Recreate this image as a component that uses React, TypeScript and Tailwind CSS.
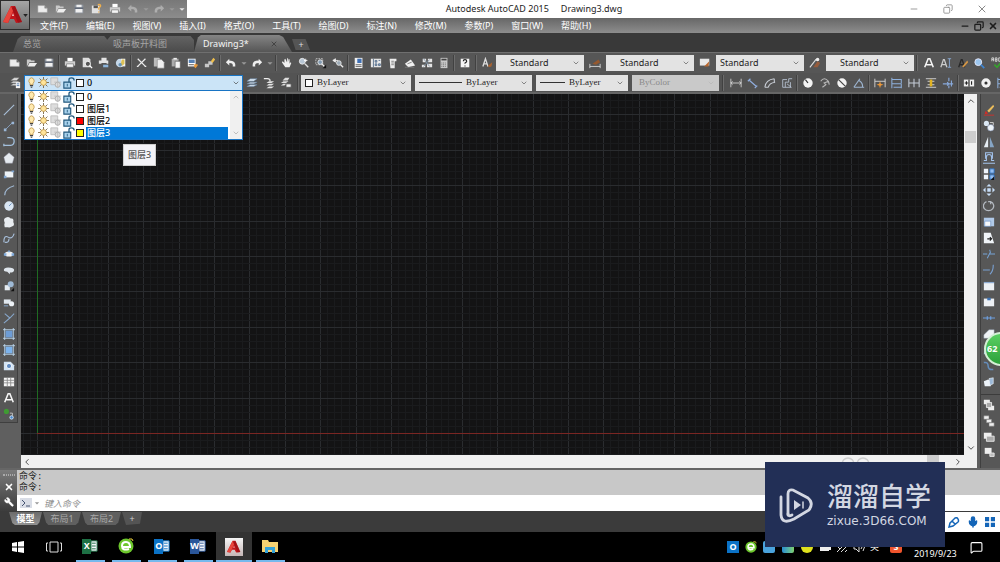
import { useState } from 'react';
import type { ReactNode } from 'react';
import { ChevronDown, ChevronLeft, ChevronRight, ChevronUp, Copy, MessageSquare, Mic, Minus, Wrench, X } from 'lucide-react';

const icons: Record<string, ReactNode> = {
  // file
  new: <path d="M1 3h8l3 3v5H1z M9 3v3h3" fill="#ececec" stroke="#999" strokeWidth=".6" />,
  open: <><path d="M1 3h4l1 1h4v2H4l-3 5z" fill="#c9c9c9" /><path d="M4 7h9l-3 4H2z" fill="#eee" /></>,
  save: <><path d="M2 2h10v10H2z" fill="#8e959f" /><path d="M4 2h6v3H4z M3 7h8v4H3z" fill="#f0f0f0" /><path d="M2 6h10" stroke="#3d4656" /></>,
  saveAs: <><path d="M1 3h9v9H1z" fill="#e0e0e0" /><path d="M3 3h5v3H3z" fill="#555" /><path d="M8 2q4-1 3 2l-2 2v2 M9 10v1" stroke="#f0b04c" strokeWidth="1.6" fill="none" /></>,
  print: <><path d="M4 1h6v4H4z" fill="#fff" /><path d="M1 5h12v5H1z" fill="#cfcfcf" /><path d="M3 8h8v4H3z" fill="#f5f5f5" stroke="#666" strokeWidth=".7" /></>,
  preview: <><path d="M2 1h7l2 2v9H2z" fill="#ddd" /><circle cx="8" cy="8" r="3" fill="#555" stroke="#fff" /><path d="m10 10 3 3" stroke="#fff" strokeWidth="1.5" /></>,
  publish: <><path d="M4 1h6v3H4z M1 4h11v4H1z" fill="#e4e4e4" /><path d="M4 7h6v4H4z" fill="#555" /><path d="M6 9h6v3H6z" fill="#8db6dc" /></>,
  globe: <><circle cx="6" cy="7" r="5" fill="#c4d7e8" /><path d="M7 2h5v9H7z" fill="#f2f2f2" /><path d="M8 3h3v5l-2 2H6z" fill="#ddc257" /><circle cx="6" cy="9" r="2" fill="#6894b8" /></>,
  cut: <path d="M2 2l9 9 M11 2 2 11 M1 11h2 M10 11h2" stroke="#eee" strokeWidth="1.4" />,
  copy: <><path d="M1 1h6l2 2v8H1z" fill="#bbb" /><path d="M5 3h5l3 3v7H5z" fill="#f0f0f0" stroke="#777" strokeWidth=".6" /></>,
  paste: <><path d="M2 2h8v9H2z" fill="#aaa" /><path d="M4 1h4v2H4z" fill="#eee" /><path d="M6 5h6v8H6z" fill="#f4f4f4" stroke="#555" strokeWidth=".7" /></>,
  match: <><path d="M1 2h9v9H1z" fill="#fff" /><path d="M2 3h7v4H2z" fill="#5681b5" /><path d="M2 9h6" stroke="#444" /><path d="m9 8 4 1-3 4-2-2z" fill="#e79a3c" /></>,
  brush: <><path d="M1 8h5v4H1z M5 5h5v4H5z" fill="#c7c7c7" /><path d="m8 5 3-4 2 2-3 4z" fill="#efbf4c" /></>,
  undo: <path d="M1 6l4-4v2q8 0 7 7h-3q1-4-4-4v3z" fill="#eee" />,
  redo: <path d="M13 6 9 2v2q-8 0-7 7h3q-1-4 4-4v3z" fill="#eee" />,
  caret: <path d="M4 6h6l-3 3z" fill="#999" />,
  hand: <path d="m4 7-2-2-1 1 4 6h5l2-5-1-1-1 2V3l-1-1-1 4V2L7 1v5L5 2 4 3z" fill="#f0f0f0" />,
  zoom: <><circle cx="5" cy="5" r="3.4" fill="#b8c7d5" stroke="#eee" /><path d="m8 8 4 4" stroke="#ddd" strokeWidth="1.6" /><path d="M9 2v4 M7 4h4" stroke="#fff" /></>,
  zoomWin: <><path d="M1 2h8v7H1z" fill="none" stroke="#ccc" strokeDasharray="2 1" /><circle cx="6" cy="6" r="2.7" fill="#8199b0" stroke="#eee" /><path d="m8 8 3 3" stroke="#eee" strokeWidth="1.5" /><path d="M13 9v4H9z" fill="#111" /></>,
  zoomPrev: <><path d="M1 4h6 M1 4l3-2v4z" stroke="#eee" fill="#eee" /><circle cx="8" cy="7" r="2.7" fill="#9ba9b5" stroke="#eee" /><path d="m10 9 3 3" stroke="#eee" strokeWidth="1.5" /></>,
  props: <><path d="M2 1h9v12H2z" fill="#f0f0f0" /><path d="M5 2h5v5H5z" fill="#3f70b5" /><path d="M3 9h7 M3 11h7" stroke="#555" /></>,
  palette: <><path d="M1 2h12v10H1z" fill="#e8e8e8" /><path d="M4 2v10 M6 4h2v2H6z M10 4h2 M6 8h2v2H6z M10 8h2v2h-2z" stroke="#536b87" fill="#9fb7d2" /></>,
  toolPal: <><path d="M3 2h8v3H9v8H4z" fill="#ededed" /><path d="M5 5h3 M5 7h3 M5 9h3" stroke="#777" /></>,
  sheet: <><path d="m1 8 7-5 5 7-8 2z" fill="#f0f0f0" /><path d="m4 8 5-2 M1 12h11" stroke="#777" /></>,
  markup: <><path d="M2 2h4v4H2z M8 2h5v4H8z M7 8h6v4H7z M1 9h4v3H1z" fill="#e5e5e5" /><path d="m3 2 7 9 M10 3 3 11" stroke="#7d91a4" /></>,
  calc: <><path d="M3 1h8v12H3z" fill="#c9c9c9" /><path d="M4 3h6" stroke="#444" strokeWidth="2" /><path d="M4 7h6 M4 9h6 M4 11h6" stroke="#666" strokeDasharray="1 1" /></>,
  help: <><path d="M2 2h10v10H2z" fill="#f4f4f4" /><path d="M5 5q0-2 2-2t2 2q0 1-2 2v1 M7 10v1" stroke="#222" fill="none" strokeWidth="1.3" /></>,
  textStyle: <><path d="m1 11 3-9 3 9 M2 8h4" stroke="#ddd" fill="none" strokeWidth="1.5" /><path d="m7 10 5-4-1 5-3 1z" fill="#a8612f" /></>,
  dimStyle: <><path d="M1 8v5 M13 8v5 M1 11h12" stroke="#ddd" /><path d="m4 8 7-5 2 3-5 3z" fill="#96592f" /></>,
  tableStyle: <><path d="M1 2h11v8H1z" fill="#e8e8e8" /><path d="m6 11 6-6-1 6z" fill="#b8662d" /></>,
  leaderStyle: <><path d="M1 12 8 3h3" stroke="#ddd" fill="none" strokeWidth="1.3" /><path d="m5 12 5-7 3 2-3 5z" fill="#965b3b" /><circle cx="10" cy="3" r="2" fill="#eee" /></>,
  textA: <path d="M2 12 6 2h2l4 10 M4 9h6" stroke="#f5f5f5" fill="none" strokeWidth="1.8" />,
  textAI: <><path d="m1 12 3-9h1l3 9 M2 9h5" stroke="#ccc" fill="none" strokeWidth="1.5" /><path d="M9 2h4 M9 12h4 M11 2v10" stroke="#8caeda" /></>,
  textEdit: <><path d="m2 12 3-9h1l3 9 M4 9h4" stroke="#292929" fill="none" strokeWidth="1.6" /><path d="m6 11 6-7 1 2-5 6z" fill="#d49645" /></>,
  find: <><circle cx="5" cy="6" r="4" fill="#9dc7ef" stroke="#eef" /><path d="m8 9 4 4" stroke="#3f84cf" strokeWidth="2" /></>,
  spell: <><path d="M1 5V1h2v4 M1 3h2 M5 1h2v4H5z M5 3h2 M12 1H9v4h3" stroke="#ddd" fill="none" /><path d="m4 9 3 3 5-6" stroke="#36a12d" fill="none" strokeWidth="2" /></>,
  // layers
  layers: <><path d="m2 4 4-3h6L9 4z M2 7l3-2h7L9 7z M2 10l3-2h7l-3 2z" fill="#dedede" stroke="#777" strokeWidth=".5" /><path d="M8 6h5v7H8z" fill="#f4f4f4" /><path d="M9 8h3 M9 10h3" stroke="#4f79ad" /></>,
  layerCur: <path d="m1 5 4-3h8L9 5z M1 8l4-2h8L9 8z M1 11l4-2h8l-4 2z" fill="#d7e5f1" stroke="#6684a4" strokeWidth=".6" />,
  layerPrev: <><path d="m4 7 3-2h6l-3 2z M4 10l3-2h6l-3 2z M4 13l3-2h6l-3 2z" fill="#e3e3e3" /><path d="M1 2h4q4 0 3 3" stroke="#eee" fill="none" strokeWidth="1.5" /></>,
  layerState: <><path d="m3 4 3-3h5L9 4z M1 7l3-2h6L7 7z M1 10l3-2h4l-3 2z" fill="#ddd" /><path d="M7 8h6v4H7z" fill="#efefef" stroke="#555" /></>,
  bulb: <><path d="M7 1a4 4 0 0 0-2 7v2h4V8a4 4 0 0 0-2-7" fill="#ffeab0" stroke="#ba9041" /><path d="M5 11h4 M6 13h2" stroke="#444" strokeWidth="1.4" /></>,
  sun: <><path d="M7 0v14 M0 7h14 M2 2l10 10 M12 2 2 12" stroke="#665330" /><circle cx="7" cy="7" r="3.7" fill="#ffe49a" stroke="#bd9345" /></>,
  vp: <><path d="M1 1h8v8H1z" fill="#ddd" stroke="#bbb" /><circle cx="9" cy="9" r="3" fill="#ddd" stroke="#aaa" /><path d="M5 6h8 M9 5v8" stroke="#bbb" /></>,
  lock: <><path d="M1 6h8v7H1z" fill="#a9d2ec" stroke="#20577c" strokeWidth="1.3" /><path d="M7 6V3q0-2 3-2 3 0 3 3" stroke="#20577c" fill="none" strokeWidth="1.5" /><path d="M5 8v3" stroke="#20577c" /></>,
  // dimensions
  dimLin: <path d="M1 2v10 M13 2v10 M1 7h12 M3 5 1 7l2 2 M11 5l2 2-2 2" stroke="#d5d5d5" fill="none" />,
  dimAl: <path d="m1 5 3-3 M9 13l3-3 M3 4l8 7" stroke="#91aede" fill="none" strokeWidth="1.4" />,
  dimArc: <path d="M1 12Q2 3 12 2 M5 12q1-5 8-6 M1 12h4 M12 2v4" stroke="#c9ced6" fill="none" strokeWidth="1.2" />,
  dimOrd: <path d="M2 3v9h10 M5 12V6h4V2h4 M2 3h5 M7 8l5 4 M11 6v6" stroke="#b9c5d4" fill="none" />,
  dimRad: <><circle cx="7" cy="7" r="5.5" fill="#f3f3f3" /><path d="m7 7-3-4" stroke="#333" strokeWidth="1.4" /></>,
  dimJog: <path d="M2 5q4-6 9 0l1 4 M11 5 6 7l2 2-4 3" stroke="#b8b8b8" fill="none" strokeWidth="1.3" />,
  dimDia: <><circle cx="7" cy="7" r="5.5" fill="#f3f3f3" /><path d="m3 3 8 8" stroke="#444" strokeWidth="1.4" /></>,
  dimAng: <path d="M1 12h12 M1 12 8 2 M7 4q5 3 4 8" stroke="#9eb6d2" fill="none" strokeWidth="1.3" />,
  dimQuick: <><path d="M1 2v10 M13 2v10 M1 5h12" stroke="#ddd" /><path d="m7 5 1 3 3 1-3 1-1 3-1-3-3-1 3-1z" fill="#ec9839" /></>,
  dimBase: <path d="M1 1v12 M1 3h11v4 M1 8h11v5 M3 12h9" stroke="#8fb1dd" fill="none" strokeWidth="1.2" />,
  dimCont: <path d="M1 2v10 M7 2v10 M13 2v10 M1 7h12" stroke="#c7cfda" strokeWidth="1.2" />,
  dimSpace: <><path d="M1 2h12 M1 12h12 M3 5h8 M3 9h8" stroke="#ddd" /><path d="M7 3v8" stroke="#e2b321" strokeWidth="3" /></>,
  dimBreak: <path d="M1 8h12 M8 1v4 M8 10v3 M11 4v7 M6 6l2 2-2 2" stroke="#88a9db" fill="none" strokeWidth="1.3" />,
  tol: <><path d="M1 3h12v8H1z" fill="#eee" /><path d="M2 7h4 M4 5v4 M7 3v8 M10 5v4" stroke="#222" strokeWidth="1.3" /></>,
  center: <><circle cx="7" cy="7" r="5.5" fill="#f1f1f1" /><circle cx="7" cy="7" r="1.8" fill="#333" /></>,
  // draw
  line: <path d="M1 13 13 1" stroke="#a8bed6" strokeWidth="1.3" />,
  xline: <><path d="m3 11 8-8" stroke="#8aa6c8" /><path d="M1 10h3v3H1z M10 2h3v3h-3z" fill="#9ab6d6" /></>,
  pline: <path d="M5 2h3q5 0 5 4t-4 5H1 M1 9v3" stroke="#a2bfdb" fill="none" strokeWidth="1.5" />,
  polygon: <path d="m7 1 6 5-2 7H3L1 6z" fill="#e6ebf0" stroke="#99a" strokeWidth=".5" />,
  rect: <><path d="M2 4h10v7H2z" fill="#edf2f6" /><path d="M1 9h3v3H1z M10 3h3v2h-3z" fill="#7fa5d0" /></>,
  arc: <path d="M2 13q0-8 11-11" stroke="#9fb7d1" fill="none" strokeWidth="1.4" />,
  circle: <><circle cx="7" cy="7" r="5.5" fill="#d9e6f3" /><path d="m7 7 3-3" stroke="#5d87ba" /></>,
  cloud: <path d="M2 13q-1-3 0-5-2-5 1-6 4-2 6 1 4-1 3 4 2 4-1 5-3 2-5 1z" fill="#e8ecf0" />,
  spline: <path d="M1 12q0-9 5-6t7-4 M2 12q5 1 5-4" stroke="#a9c1dd" fill="none" strokeWidth="1.3" />,
  ellipse: <><ellipse cx="7" cy="7" rx="5" ry="3" fill="#eef1f4" /><path d="M1 6h3v3H1z M10 6h3v3h-3z M6 3h2v2H6z" fill="#7faadb" /></>,
  ellArc: <path d="M1 7q0-3 5-3 7 0 7 3 0 3-5 3v2L5 9q-4 0-4-2" fill="#dfe6ed" />,
  insert: <><path d="M2 6h6v6H2z" fill="#e5ebf1" /><circle cx="9" cy="5" r="3.5" fill="#9eb9d5" /><path d="M13 9v4H9z" fill="#111" /></>,
  block: <><path d="M1 4h8v5H1z" fill="#e0e7ee" /><circle cx="10" cy="9" r="3" fill="#edf2f7" /><path d="M1 11h5v1H1z" fill="#8eb5e0" /></>,
  point: <path d="m2 2 6 5 5-5 M8 7l-7 6" stroke="#88a8cc" fill="none" strokeWidth="1.2" />,
  hatch: <><path d="M3 3h8v8H3z" fill="#6d9cd5" /><path d="M2 0v14 M12 0v14 M0 2h14 M0 12h14" stroke="#bfd9f1" /></>,
  grad: <><path d="M3 3h8v8H3z" fill="#7cb3ed" /><path d="M2 0v14 M12 0v14 M0 2h14 M0 12h14" stroke="#bfd9f1" /></>,
  region: <><path d="M1 2h8l4 4v6H1z" fill="#d2e3f3" /><circle cx="7" cy="7" r="3" fill="#5f8ac1" stroke="#fff" /></>,
  table: <><path d="M1 2h12v10H1z" fill="#f5f5f5" /><path d="M1 5h12 M1 8h12 M5 2v10 M9 2v10" stroke="#888" /></>,
  addSel: <><circle cx="4" cy="4" r="3" fill="#3f9b33" /><path d="M8 6h3v3" stroke="#ccc" fill="none" /><circle cx="10" cy="11" r="2" fill="#4a88cb" stroke="#dcecff" /></>,
  // modify
  erase: <><path d="m5 8 7-7 1 2-6 7z" fill="#edbd5b" /><path d="m3 8 3 3-4 1z" fill="#d62c25" /><path d="M1 13h12" stroke="#d72f29" /></>,
  copyObj: <><circle cx="4" cy="4" r="3" fill="#dbe8f4" /><circle cx="9" cy="9" r="3.8" fill="#edf3f8" stroke="#78a" strokeWidth=".6" /><path d="M8 3h4v3" stroke="#ddd" fill="none" /></>,
  mirror: <><path d="M6 1v12H1z" fill="#e6edf3" /><path d="M8 1v12h5z" fill="#86a5c5" /></>,
  offset: <path d="M0 13h14 M1 10h3V6q0-3 3-3t3 3v4h3 M3 8V1h8v7" stroke="#a3c3ec" fill="none" strokeWidth="1.2" />,
  array: <><path d="M1 1h5v5H1z M1 8h5v5H1z" fill="#eef4fb" /><path d="M8 1h5v5H8z M8 8h5v5H8z" fill="#94bdf0" stroke="#286dbb" /><path d="M13 10v4H9z" fill="#111" /></>,
  move: <path d="m7 0 3 3H4z M7 14l3-3H4z M0 7l3-3v6z M14 7l-3-3v6z M5 5h4v4H5z" fill="#c7def8" />,
  rotate: <path d="M4 2a6 5.500 0 1 0 5 0M6 2h3v3" stroke="#b4bac1" fill="none" strokeWidth="1.5" />,
  scale: <><path d="M1 2h12v10H1z" fill="#b1cae8" /><path d="M2 6h7v6H2z" fill="#f5f8fb" stroke="#4b79b5" strokeWidth=".6" /></>,
  stretch: <><path d="M1 1h8l4 12H1z" fill="#f0f4f8" /><path d="M5 8h5m-2-2 2 2-2 2" stroke="#222" fill="none" strokeWidth="1.3" /></>,
  trim: <path d="M0 7h5 M8 7h6 M8 2v2 M5 12l4-8" stroke="#76a3d6" strokeWidth="1.2" />,
  extend: <path d="M0 7h8 M8 12q4-3 4-11" stroke="#799fd0" fill="none" strokeWidth="1.3" />,
  breakPt: <><path d="M1 3h12v9H1z" fill="#edf0f4" /><path d="M1 3h12" stroke="#8caad0" strokeWidth="1.5" /></>,
  break: <><path d="M1 3h12v9H1z" fill="#edf0f4" /><path d="M5 2h4v3H5z" fill="#3e72b2" /></>,
  join: <path d="M0 7h14 M5 5v4 M9 5v4" stroke="#6fa0e0" strokeWidth="1.4" />,
  chamfer: <path d="M1 8 7 2h6v10H1z" fill="#eff2f5" stroke="#89a" strokeWidth=".5" />,
  fillet: <path d="M1 12q0-9 8-9h4v9z" fill="#adc9e8" />,
  blend: <path d="M1 3q5-1 5 4t6 4" stroke="#648dbb" fill="none" strokeWidth="1.8" />,
  explode: <><path d="m1 6 5-2 3 2v6H2z" fill="#ecf2f8" /><path d="m7 3 5-1v7l-4 2z" fill="#9dbad9" stroke="#fff" strokeWidth=".6" /></>,
  order1: <><path d="M1 1h7v5H1z M6 8h7v5H6z" fill="#eee" /><path d="M4 4h6v6H4z" fill="#aaa" stroke="#eee" /></>,
  order2: <path d="M1 1h6v4H1z M4 5h6v4H4z M7 9h6v4H7z" fill="#eee" stroke="#777" strokeWidth=".6" />,
  order3: <><path d="M1 2h9v7H1z" fill="#eee" /><path d="M4 6h9v6H4z" fill="#aaa" stroke="#eee" /></>,
  order4: <><path d="M2 1h8v7H2z" fill="#eee" /><path d="M8 7h5v4H8z" fill="#bbb" stroke="#eee" /></>,
};

function ToolButton({ name, className = 'w-[17px]' }: { name: string; className?: string }) {
  return (
    <button type="button" aria-label={name} className={`flex h-4 shrink-0 items-center justify-center ${className}`}>
      <Glyph name={name} />
    </button>
  );
}

function Glyph({ name, className = 'size-3' }: { name: string; className?: string }) {
  return <svg viewBox="0 0 14 14" className={`shrink-0 ${className}`}>{icons[name]}</svg>;
}

const Tools = ({ names }: { names: string[] }) => (
  <div className="flex shrink-0">{names.map((n) => <ToolButton key={n} name={n} />)}</div>
);

const Sep = ({ className = 'w-1' }: { className?: string }) => (
  <span className={`flex h-4 shrink-0 justify-center ${className}`}>
    <span className="w-px bg-[#414141]" />
    <span className="w-px bg-[#6c6c6c]" />
  </span>
);

function Combo({ label, value, className, children, disabled = false }: {
  label: string;
  value: string;
  className: string;
  children?: ReactNode;
  disabled?: boolean;
}) {
  return (
    <label className={`flex h-4 shrink-0 items-center gap-1 pr-1 ${disabled ? 'bg-[#c9c9c9] text-[#8a8a8a]' : 'bg-[#e3e3e3] text-[#1c1c1c]'} ${className}`}>
      {children}
      <select aria-label={label} disabled={disabled} className="h-4 min-w-0 flex-1 appearance-none bg-transparent">
        <option>{value}</option>
      </select>
      <ChevronDown className={`size-2 ${disabled ? 'text-[#b5b5b5]' : 'text-[#555]'}`} />
    </label>
  );
}

const menus = ['文件(F)', '编辑(E)', '视图(V)', '插入(I)', '格式(O)', '工具(T)', '绘图(D)', '标注(N)', '修改(M)', '参数(P)', '窗口(W)', '帮助(H)'];

const AutocadMark = ({ className }: { className: string }) => (
  <svg viewBox="0 0 20 20" className={className}>
    <path d="M8 1h4l7 16-6 1-2-4H7l-2 4-5-1z" fill="#c3161c" />
    <path d="M8 1 0 17l5 1 5-12z" fill="#e8453c" />
    <path d="m10 8 1 3H9z" fill="#f1c9c6" />
    <path d="m12 1 7 16-4 1L9 3z" fill="#8f0d12" opacity=".6" />
  </svg>
);

function Header() {
  return (
    <header className="flex h-[33px] bg-[#686868]">
      <button type="button" aria-label="应用程序菜单" className="flex h-[30px] w-[30px] shrink-0 items-center border border-[#2c2c2c] bg-linear-to-b from-[#a5a5a5] to-[#6b6b6b] pl-0.5">
        <AutocadMark className="size-5" />
        <svg viewBox="0 0 6 4" className="h-[3px] w-[5px]"><path d="M0 0h6L3 4z" fill="#222" /></svg>
      </button>
      <div className="flex min-w-0 flex-1 flex-col">
        <div className="flex h-[18px] bg-white">
          <div className="flex w-[157px] shrink-0 items-center bg-linear-to-b from-[#787878] to-[#8c8c8c] pl-1">
            {['new', 'open', 'save', 'saveAs', 'print', 'undo'].map((n) => <ToolButton key={n} name={n} className={n === 'undo' ? 'w-[18px] opacity-40' : 'w-[18px]'} />)}
            <ToolButton name="caret" className="w-2" />
            <ToolButton name="redo" className="w-[18px] opacity-40" />
            <ToolButton name="caret" className="w-2" />
            <ToolButton name="caret" className="w-3 brightness-150" />
          </div>
          <h1 className="flex flex-1 items-center justify-center gap-3 pr-6 text-[9px] text-[#1c1c1c]">
            <span>Autodesk AutoCAD 2015</span>
            <span>Drawing3.dwg</span>
          </h1>
          <div className="flex w-[95px] shrink-0 items-center justify-between pr-3 pl-1 text-[#8a8a8a]">
            <button type="button" aria-label="最小化"><Minus className="size-2.5" /></button>
            <button type="button" aria-label="还原"><Copy className="size-2.5 -scale-x-100" /></button>
            <button type="button" aria-label="关闭"><X className="size-3" /></button>
          </div>
        </div>
        <nav className="flex flex-1 items-center bg-linear-to-b from-[#676767] to-[#8d8d8d] pl-2.5 text-[9px] text-white">
          {menus.map((m) => <button key={m} type="button" className="mr-[18px] shrink-0 leading-3">{m}</button>)}
          <div className="ml-auto flex gap-1 pr-0.5 text-[#1d1d1d]">
            <Minus className="size-2.5" strokeWidth={3} />
            <Copy className="size-2.5 -scale-x-100" strokeWidth={3} />
            <X className="size-2.5" strokeWidth={4} />
          </div>
        </nav>
      </div>
    </header>
  );
}

function FileTabs() {
  return (
    <div className="flex h-[19px] items-end bg-[#393939] pl-[13px] text-[9px] text-[#a5a5a5]">
      <button type="button" className="h-4 w-[94px] bg-linear-to-b from-[#636363] to-[#4b4b4b] pl-2.5 text-left [clip-path:polygon(9%_0,97%_0,100%_20%,100%_100%,0_100%,5%_18%)]">总览</button>
      <button type="button" className="h-4 w-[87px] bg-linear-to-b from-[#636363] to-[#4b4b4b] pl-1.5 text-left [clip-path:polygon(4%_0,96%_0,100%_25%,100%_100%,0_100%,0_25%)]">吸声板开料图</button>
      <div className="flex h-[17px] w-[98px] items-center justify-between bg-linear-to-b from-[#858585] to-[#565656] pr-[14px] pl-[9px] text-[#f5f5f5] [clip-path:polygon(7%_0,87%_0,91%_12%,100%_100%,0_100%,4%_15%)]">
        <button type="button">Drawing3*</button>
        <X className="size-2 text-[#444]" strokeWidth={3} />
      </div>
      <button type="button" aria-label="新图形" className="mb-0.5 h-[11px] w-[18px] bg-[#555] leading-[10px] text-[#ddd] [clip-path:polygon(0_0,75%_0,100%_100%,20%_100%)]">+</button>
    </div>
  );
}

function MainToolbar() {
  return (
    <div className="flex h-[21px] items-center overflow-hidden border-t border-[#6f6f6f] bg-[#565656] pl-1.5 text-[9px]">
      <Tools names={['new', 'open', 'save']} />
      <Sep />
      <Tools names={['print', 'preview', 'publish', 'globe']} />
      <Sep />
      <Tools names={['cut', 'copy', 'paste', 'match', 'brush']} />
      <Sep />
      <ToolButton name="undo" />
      <ToolButton name="caret" className="w-[9px]" />
      <ToolButton name="redo" />
      <ToolButton name="caret" className="w-[9px]" />
      <Sep />
      <Tools names={['hand', 'zoom', 'zoomWin', 'zoomPrev']} />
      <Sep />
      <Tools names={['props', 'palette', 'toolPal', 'sheet', 'markup', 'calc']} />
      <Sep />
      <ToolButton name="help" />
      <Sep className="w-1.5" />
      <ToolButton name="textStyle" />
      <Combo label="文字样式" value="Standard" className="w-[88px] pl-[14px]" />
      <ToolButton name="dimStyle" className="w-[22px]" />
      <Combo label="标注样式" value="Standard" className="w-[88px] pl-[14px]" />
      <ToolButton name="tableStyle" className="w-[22px]" />
      <Combo label="表格样式" value="Standard" className="w-[88px] pl-1" />
      <ToolButton name="leaderStyle" className="w-[22px]" />
      <Combo label="多重引线样式" value="Standard" className="w-[88px] pl-[14px]" />
      <Sep className="w-1.5" />
      <Tools names={['textA', 'textAI', 'textEdit', 'find', 'spell']} />
    </div>
  );
}

const layers = [
  { name: '0', color: 'bg-white' },
  { name: '图层1', color: 'bg-white' },
  { name: '图层2', color: 'bg-[#ff0000]' },
  { name: '图层3', color: 'bg-[#ffff00]' },
];

const LayerFlags = ({ color }: { color: string }) => (
  <span className="flex w-[61px] shrink-0 items-center gap-px pl-px">
    <Glyph name="bulb" className="h-[11px] w-[11px]" />
    <Glyph name="sun" className="h-[11px] w-[11px]" />
    <Glyph name="vp" className="h-3 w-3" />
    <Glyph name="lock" className="h-3 w-3" />
    <span className={`size-2 shrink-0 border border-[#222] ${color}`} />
  </span>
);

function LayerSelect() {
  const [active, setActive] = useState('图层3');

  return (
    <div className="relative ml-px w-[219px] shrink-0 text-[9px] text-black">
      <label className="flex h-4 items-center border border-[#1874c4] bg-[#cbe4f7] pr-0.5">
        <LayerFlags color="bg-white" />
        <select aria-label="图层" className="h-3.5 flex-1 appearance-none bg-transparent pl-px">
          <option>0</option>
        </select>
        <ChevronDown className="size-2 text-[#444]" />
      </label>
      <div className="absolute top-[15px] left-0 z-20 flex w-[219px] border border-[#1874c4] bg-white">
        <ul role="listbox" aria-label="图层列表" className="flex-1">
          {layers.map((layer) => (
            <li key={layer.name} role="option" aria-selected={layer.name === active} onMouseEnter={() => setActive(layer.name)} className="flex h-3 items-center">
              <LayerFlags color={layer.color} />
              <span className={`h-3 flex-1 pl-px leading-3 ${layer.name === active ? 'bg-[#0078d7] text-white' : ''}`}>{layer.name}</span>
            </li>
          ))}
        </ul>
        <div className="ml-0.5 flex w-3 flex-col items-center justify-between bg-[#f0f0f0] py-0.5 text-[#a5a5a5]">
          <ChevronUp className="size-2" />
          <ChevronDown className="size-2" />
        </div>
      </div>
      <div role="tooltip" className="absolute top-[69px] left-[99px] z-20 border border-[#cfcfcf] bg-[#f3f3f7] px-1 py-1 leading-3 whitespace-nowrap text-[#575757]">
        图层3
      </div>
    </div>
  );
}

function LayerToolbar() {
  return (
    <div className="flex h-[21px] items-center border-b-2 border-[#666] bg-[#535353] pl-1.5 font-['Liberation_Serif','Noto_Sans_CJK_SC',serif] text-[9px] font-medium">
      <ToolButton name="layers" />
      <div className="font-['Noto_Sans','Noto_Sans_CJK_SC',sans-serif]"><LayerSelect /></div>
      <Tools names={['layerCur', 'layerPrev', 'layerState']} />
      <Sep className="w-[7px]" />
      <div className="flex shrink-0 gap-1">
        <Combo label="颜色" value="ByLayer" className="w-[110px] pl-1">
          <span className="size-2 border border-[#222] bg-white" />
        </Combo>
        <Combo label="线型" value="ByLayer" className="w-[117px] pl-1">
          <span className="h-px w-[43px] bg-[#333]" />
        </Combo>
        <Combo label="线宽" value="ByLayer" className="w-[92px] pl-1">
          <span className="h-px w-[25px] bg-[#333]" />
        </Combo>
        <Combo label="打印样式" value="ByColor" className="w-[87px] pl-[7px]" disabled />
      </div>
      <Sep className="w-2" />
      <div className="flex min-w-0 flex-1 overflow-hidden">
        <Tools names={['dimLin', 'dimAl', 'dimArc', 'dimOrd']} />
        <Sep />
        <Tools names={['dimRad', 'dimJog', 'dimDia', 'dimAng']} />
        <Sep />
        <Tools names={['dimQuick', 'dimBase', 'dimCont', 'dimSpace', 'dimBreak']} />
        <Sep />
        <Tools names={['tol', 'center', 'dimBase']} />
      </div>
    </div>
  );
}

const drawTools = ['line', 'xline', 'pline', 'polygon', 'rect', 'arc', 'circle', 'cloud', 'spline', 'ellipse', 'ellArc', 'insert', 'block', 'point', 'hatch', 'grad', 'region', 'table', 'textA', 'addSel'];
const modifyTools = ['erase', 'copyObj', 'mirror', 'offset', 'array', 'move', 'rotate', 'scale', 'stretch', 'trim', 'extend', 'breakPt', 'break', 'join', 'chamfer', 'fillet', 'blend', 'explode'];

// UCS origin inside the drawing area, and the spacing of the minor grid
const ORIGIN = { x: 16, y: 339 };
const STEP = 7.08;

function DrawingGrid() {
  const range = (from: number, to: number) => Array.from({ length: to - from + 1 }, (_, i) => from + i);
  const stroke = (i: number) => (i % 5 === 0 ? '#2a2c2f' : '#1a1b1d');
  const sorted = (list: number[]) => [...list].sort((a, b) => Number(a % 5 === 0) - Number(b % 5 === 0));

  return (
    <svg className="h-full w-full bg-[#131314]" shapeRendering="crispEdges">
      {sorted(range(-2, 360)).map((i) => {
        const x = Math.round(ORIGIN.x + i * STEP) + 0.5;
        return <line key={`v${i}`} x1={x} x2={x} y1="0" y2="100%" stroke={stroke(i)} />;
      })}
      {sorted(range(-120, 47)).map((i) => {
        const y = Math.round(ORIGIN.y - i * STEP) + 0.5;
        return <line key={`h${i}`} x1="0" x2="100%" y1={y} y2={y} stroke={stroke(i)} />;
      })}
      <rect x={ORIGIN.x} y="0" width="1" height={ORIGIN.y} fill="#1f6b22" />
      <rect x={ORIGIN.x} y={ORIGIN.y} width="100%" height="1" fill="#7a2623" />
    </svg>
  );
}

function Workspace() {
  return (
    <main className="relative flex min-h-[374px] flex-1 overflow-hidden bg-[#5f5f5f]">
      <aside className="w-[21px] shrink-0 pr-[3px]">
        <div className="flex flex-col items-start border-r border-b border-[#3f3f3f] bg-[#575757] pt-2">
          {drawTools.map((n) => <ToolButton key={n} name={n} />)}
        </div>
      </aside>
      <div className="flex min-w-0 flex-1 flex-col">
        <div className="flex min-h-0 flex-1">
          <div className="h-[361px] min-w-0 flex-1"><DrawingGrid /></div>
          <div className="flex w-[13px] shrink-0 flex-col items-center bg-[#f1f1f1] py-0.5 text-[#333]">
            <ChevronUp className="size-2.5" />
            <span className="mt-[25px] h-3 w-[11px] bg-[#cdcdcd]" />
            <ChevronDown className="mt-auto size-2.5" />
          </div>
        </div>
        <div className="flex h-[13px] shrink-0 items-center bg-[#f1f1f1] px-px text-[#333]">
          <ChevronLeft className="size-2.5" />
          <span className="mr-[14px] ml-auto h-full w-3 bg-[#cdcdcd]" />
          <ChevronRight className="mr-[13px] size-2.5" />
        </div>
      </div>
      <aside className="ml-[3px] flex w-5 shrink-0 flex-col border-l border-[#3f3f3f] bg-[#575757] pt-2">
        {modifyTools.map((n) => <ToolButton key={n} name={n} className="w-[15px]" />)}
        <span className="mt-1 mb-0.5 h-px bg-[#3c3c3c]" />
        {['order1', 'order2', 'order3', 'order4'].map((n) => <ToolButton key={n} name={n} className="w-[15px]" />)}
      </aside>
      <div className="absolute top-[238px] -right-[18px] flex size-[34px] items-center rounded-full border-2 border-[#d3efd5] bg-linear-to-b from-[#5ad063] to-[#2ba13a] pl-px text-[9px] font-bold text-white">62</div>
      <svg viewBox="0 0 30 12" className="absolute right-[130px] bottom-0 h-3 w-[30px]">
        <circle cx="8" cy="8" r="6" fill="none" stroke="#cfcfcf" strokeWidth="1.5" />
        <circle cx="23" cy="8" r="6" fill="none" stroke="#cfcfcf" strokeWidth="1.5" />
      </svg>
    </main>
  );
}

function CommandLine() {
  return (
    <section className="flex h-[43px] border-t-2 border-[#666] bg-[#c8c8c8] text-[9px]">
      <div className="flex w-[17px] shrink-0 flex-col items-center justify-between bg-linear-to-b from-[#7b7b7b] to-[#3d3d3d] pb-1 text-white">
        <span className="mt-1 h-0.5 w-3 border-y border-dotted border-[#aaa]" />
        <button type="button" aria-label="关闭"><X className="size-2.5" strokeWidth={4} /></button>
        <button type="button" aria-label="自定义"><Wrench className="size-2.5 -scale-x-100 fill-white" /></button>
      </div>
      <div className="flex min-w-0 flex-1 flex-col">
        <div className="h-[25px] pt-0.5 pl-0.5 font-['Liberation_Mono','Noto_Sans_CJK_SC',monospace] leading-[11px] text-[#1c1c1c]">
          <p>命令:</p>
          <p>命令:</p>
        </div>
        <label className="flex h-4 items-center bg-white pl-[3px]">
          <svg viewBox="0 0 12 12" className="size-3"><path d="M0 1h12v10H0z" fill="#d9dde6" /><path d="m2 3 3 3-3 3 M6 9h4" stroke="#465472" fill="none" /></svg>
          <Glyph name="caret" className="size-2.5" />
          <input aria-label="键入命令" placeholder="键入命令" className="ml-0.5 h-3.5 flex-1 bg-transparent italic outline-none placeholder:text-[#8d8d8d]" />
        </label>
      </div>
    </section>
  );
}

function LayoutTabs() {
  return (
    <div className="flex h-[21px] items-start gap-px bg-[#3b3b3b] pt-px pl-[9px] text-[9px] leading-3 text-[#a9a9a9]">
      <button type="button" className="h-[13px] w-[33px] bg-linear-to-b from-[#6b6b6b] to-[#929292] font-bold text-white [clip-path:polygon(0_0,100%_0,92%_80%,85%_100%,18%_100%,10%_85%)]">模型</button>
      <button type="button" className="h-[13px] w-[38px] bg-[#5f5f5f] [clip-path:polygon(0_0,100%_0,93%_80%,86%_100%,14%_100%,8%_80%)]">布局1</button>
      <button type="button" className="h-[13px] w-[39px] bg-[#5f5f5f] [clip-path:polygon(0_0,100%_0,93%_80%,86%_100%,14%_100%,8%_80%)]">布局2</button>
      <button type="button" aria-label="新布局" className="h-[13px] w-5 bg-[#545454] text-[#ccc] [clip-path:polygon(0_0,100%_0,90%_90%,20%_100%)]">+</button>
    </div>
  );
}

const officeIcon = (letter: string, color: string) => (
  <span className="flex size-4 items-center">
    <span className="flex h-[15px] w-2.5 items-center justify-center text-[9px] font-bold text-white" style={{ backgroundColor: color }}>{letter}</span>
    <svg viewBox="0 0 7 12" className="h-3 w-[7px]"><path d="M0 .5h6.500v11H0z" fill="#f3f6fa" stroke={color} /><path d="M1 3h4 M1 6h4 M1 9h4" stroke={color} /></svg>
  </span>
);

const BrowserIcon = ({ className }: { className: string }) => (
  <svg viewBox="0 0 16 16" className={className}>
    <circle cx="8" cy="8" r="7.500" fill="#6cc62c" />
    <path d="M4 9h8q0-5-4-5T4 8q0 5 7 3" stroke="#fff" strokeWidth="2" fill="none" />
    <path d="M11 1q4-1 4 2" stroke="#f1d43a" fill="none" />
  </svg>
);

const apps = [
  { name: 'Excel', icon: officeIcon('X', '#1d7044') },
  { name: '360', icon: <BrowserIcon className="size-4" /> },
  { name: 'Outlook', icon: officeIcon('O', '#0b72c6') },
  { name: 'Word', icon: officeIcon('W', '#2a569a') },
  { name: 'AutoCAD', icon: <span className="flex size-[18px] items-center justify-center bg-linear-to-b from-[#f5f5f5] to-[#c4b6b6]"><AutocadMark className="size-3.5" /></span> },
  {
    name: 'Explorer',
    icon: <svg viewBox="0 0 16 16" className="size-4"><path d="M0 2h6l1 2h9v10H0z" fill="#f6d272" /><path d="M3 9h10v6h-3v-3H6v3H3z" fill="#35a3d9" /></svg>,
  },
];

function Taskbar() {
  return (
    <footer className="flex h-[30px] items-stretch bg-black text-white">
      <button type="button" aria-label="开始" className="flex w-[35px] items-center justify-center">
        <svg viewBox="0 0 12 12" className="size-3"><path d="m0 2 5-1v4.500H0z M6 1l6-1v5.500H6z M0 6.500h5V11l-5-1z M6 6.500h6V12l-6-1z" fill="#fff" /></svg>
      </button>
      <button type="button" aria-label="任务视图" className="flex w-[37px] items-center justify-center">
        <svg viewBox="0 0 16 12" className="h-3 w-4"><path d="M4 1h8v10H4z M2 2H.5v8H2 M14 2h1.500v8H14" fill="none" stroke="#ddd" /></svg>
      </button>
      {apps.map((app) => (
        <button key={app.name} type="button" aria-label={app.name} className={`flex w-9 flex-col items-center justify-between pt-1.5 ${app.name === 'AutoCAD' ? 'bg-[#333]' : ''}`}>
          {app.icon}
          <span className={`h-0.5 bg-[#76b9ed] ${app.name === 'AutoCAD' ? 'w-full' : 'w-[29px]'}`} />
        </button>
      ))}
      <div className="ml-auto flex shrink-0 items-center text-[9px]">
        <div className="flex gap-[5px]">
          <span className="mr-px flex size-3 items-center justify-center bg-[#0b72c6] text-[9px] font-bold">O</span>
          <BrowserIcon className="size-3" />
          <span className="mx-px size-3 rounded-xs bg-[#4aa3dd]" />
          <span className="mx-px size-3 rounded-xs bg-linear-to-r from-[#2a8bd0] to-[#7fd06a]" />
          <span className="mx-px size-3 rounded-full bg-[#dfe21d]" />
          <svg viewBox="0 0 12 12" className="size-3"><path d="M1 5h9v5H1z M10 6h2v3h-2z" fill="#eee" /></svg>
          <svg viewBox="0 0 12 12" className="size-3"><path d="m1 11 9-9 M5 11l6-6 M9 11l2-2 M1 5l3 3" stroke="#ddd" /></svg>
          <svg viewBox="0 0 12 12" className="size-3"><path d="M1 5h2l3-3v9L3 8H1z M8 4q2 2 0 4 M10 2q3 4 0 8" stroke="#ddd" fill="none" /></svg>
          <span className="size-3 leading-3">英</span>
        </div>
        <span className="mr-3 ml-2 flex size-3 items-center justify-center rounded-xs bg-[#f0542c] font-bold">S</span>
        <time className="mt-auto w-[45px] pb-0.5 leading-3">2019/9/23</time>
        <button type="button" aria-label="通知" className="mr-[17px] ml-[11px]"><MessageSquare className="size-[13px]" /></button>
      </div>
    </footer>
  );
}

function ImeBar() {
  return (
    <div className="absolute right-0 bottom-[30px] flex h-5 w-14 items-center justify-between bg-white pr-1 pl-1 text-[#1465b8]">
      <svg viewBox="0 0 12 12" className="size-3"><path d="M2 7 7 2q2-1 3 1t0 3l-5 4-4 1z M4 5l3 3" fill="none" stroke="#1465b8" strokeWidth="1.5" /></svg>
      <Mic className="size-3 fill-[#1465b8]" strokeWidth={3} />
      <svg viewBox="0 0 12 12" className="mr-px size-2.5"><path d="M0 0h5v5H0z M7 0h5v5H7z M0 7h5v5H0z M7 7h5v5H7z" fill="#1465b8" /></svg>
    </div>
  );
}

function Brand() {
  return (
    <div className="absolute right-[55px] bottom-[15px] z-10 flex h-[85px] w-[180px] items-center gap-3 bg-[#222f56] pl-3.5 text-[#d3d7e2]">
      <svg viewBox="0 0 36 36" className="size-[36px] shrink-0" fill="none" stroke="#d3d7e2" strokeWidth="2.800" strokeLinecap="round">
        <path d="M9 28V7q0-5 5-4l15 8q6 5 1 12L15 32Q3 38 2 28V10" />
        <path d="M9 27q0 3 4 1" />
        <path d="m15 13 7 5-7 5z" fill="#d3d7e2" stroke="none" />
        <path d="M24 15v6" strokeWidth="1.500" />
      </svg>
      <div className="-mt-1">
        <p className="font-['Noto_Sans_CJK_SC',sans-serif] text-[26px] leading-9 font-medium whitespace-nowrap">溜溜自学</p>
        <p className="font-['DejaVu_Sans',sans-serif] text-[12px] leading-4">zixue.3D66.COM</p>
      </div>
    </div>
  );
}

export default function App() {
  return (
    <div className="relative flex min-h-screen w-full flex-col overflow-hidden bg-[#3b3b3b] font-['Noto_Sans','Noto_Sans_CJK_SC',sans-serif]">
      <Header />
      <FileTabs />
      <MainToolbar />
      <LayerToolbar />
      <Workspace />
      <CommandLine />
      <LayoutTabs />
      <Taskbar />
      <ImeBar />
      <Brand />
    </div>
  );
}
